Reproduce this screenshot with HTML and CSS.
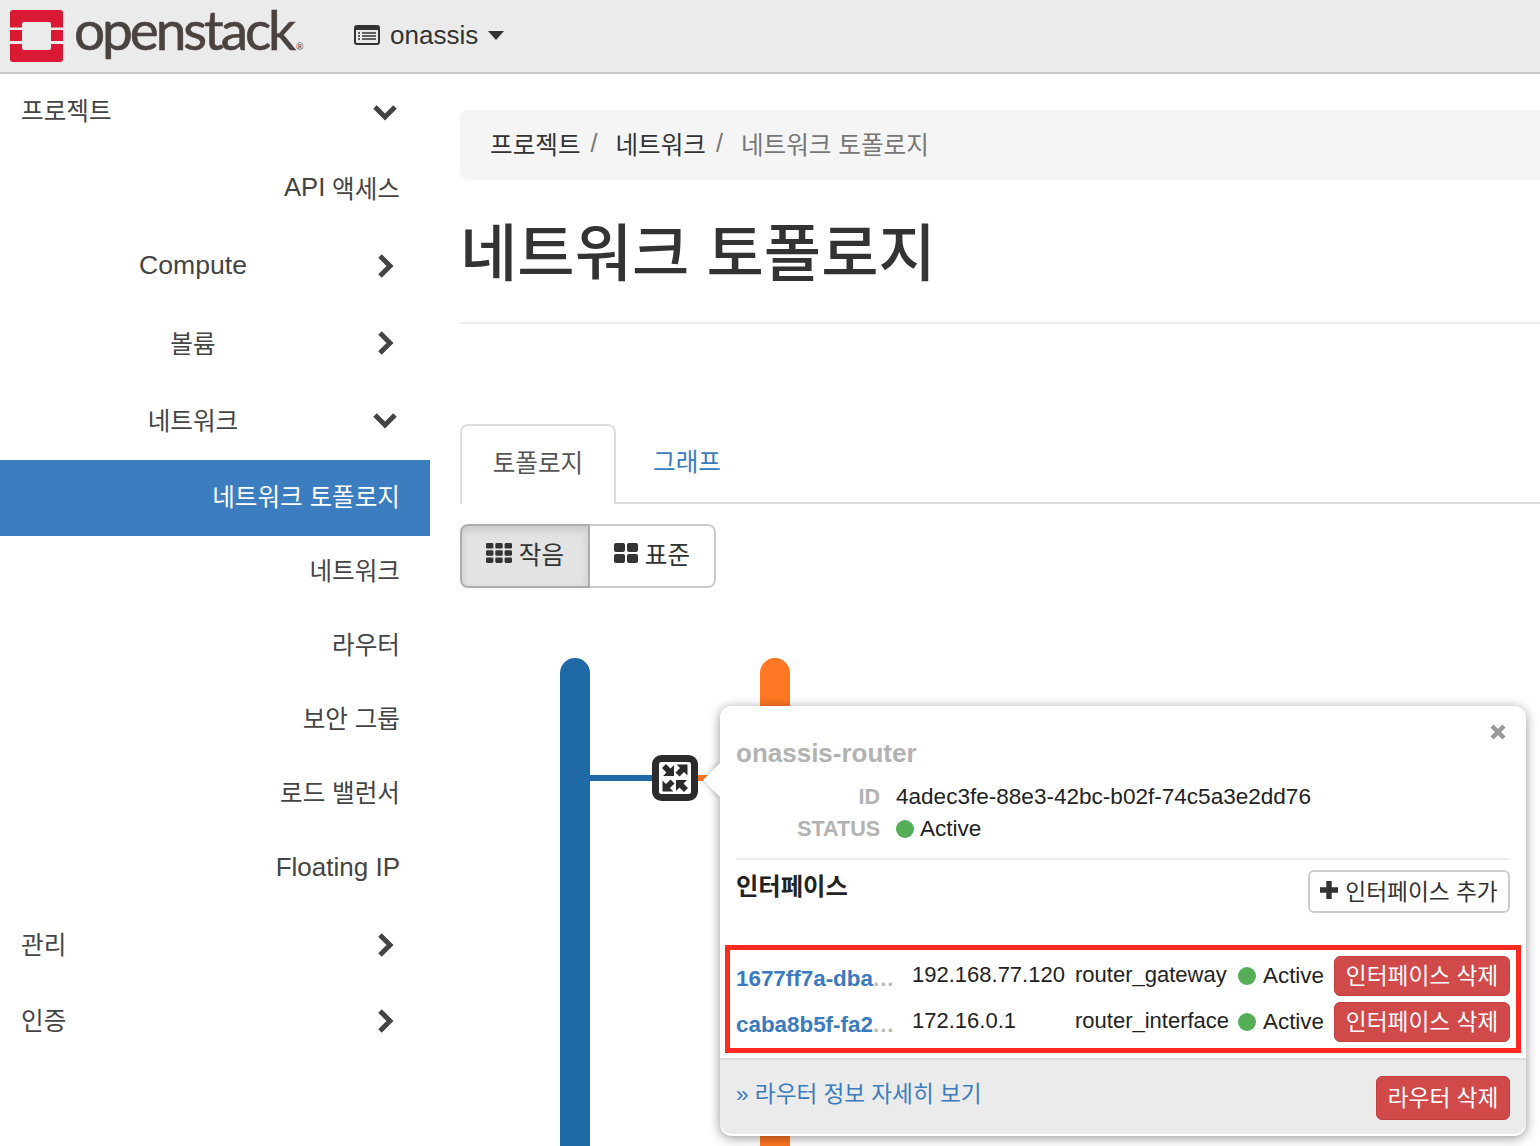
FILE: index.html
```html
<!DOCTYPE html>
<html lang="ko">
<head>
<meta charset="utf-8">
<title>네트워크 토폴로지</title>
<link rel="stylesheet" href="styles.css">
</head>
<body>
<header class="topbar">
  <a class="brand">
    <svg class="brand-mark" viewBox="0 0 53 52" aria-hidden="true">
      <path fill="#da1a32" d="M3 0h47a3 3 0 0 1 3 3v14.500H41V14a2 2 0 0 0-2-2H14a2 2 0 0 0-2 2v3.500H0V3a3 3 0 0 1 3-3zM0 20h12v11H0zM41 20h12v11H41zM0 34h12v4a2 2 0 0 0 2 2h25a2 2 0 0 0 2-2v-4h12v15a3 3 0 0 1-3 3H3a3 3 0 0 1-3-3z"/>
    </svg>
    <span class="brand-name">openstack<sup class="brand-reg">®</sup></span>
  </a>
  <div class="project-picker">
    <svg class="picker-icon" viewBox="0 0 26 20" aria-hidden="true">
      <rect x="1" y="1" width="24" height="18" rx="2" fill="none" stroke="#333" stroke-width="2"/>
      <rect x="1" y="1" width="24" height="4" fill="#333"/>
      <path d="M4 8h2M4 11h2M4 14h2M8 8h14M8 11h14M8 14h14" stroke="#333" stroke-width="1.600"/>
    </svg>
    <span>onassis</span>
    <span class="caret"></span>
  </div>
</header>
<div class="layout">
  <nav class="sidebar">
    <div class="nav-row nav-top nav-first"><span class="nav-label">프로젝트</span><svg class="chev" viewBox="0 0 26 26"><path d="M3 8l10 10L23 8"/></svg></div>
    <div class="nav-row nav-leaf nav-api"><span class="latin-run">API</span>&nbsp;액세스</div>
    <div class="nav-row nav-group"><span class="nav-label nav-latin">Compute</span><svg class="chev" viewBox="0 0 26 26"><path d="M8 3l10 10L8 23"/></svg></div>
    <div class="nav-row nav-group"><span class="nav-label">볼륨</span><svg class="chev" viewBox="0 0 26 26"><path d="M8 3l10 10L8 23"/></svg></div>
    <div class="nav-row nav-group"><span class="nav-label">네트워크</span><svg class="chev" viewBox="0 0 26 26"><path d="M3 8l10 10L23 8"/></svg></div>
    <div class="nav-row nav-leaf nav-active">네트워크 토폴로지</div>
    <div class="nav-row nav-leaf nav-sub">네트워크</div>
    <div class="nav-row nav-leaf nav-sub">라우터</div>
    <div class="nav-row nav-leaf nav-sub">보안 그룹</div>
    <div class="nav-row nav-leaf nav-sub">로드 밸런서</div>
    <div class="nav-row nav-leaf nav-sub nav-fip">Floating IP</div>
    <div class="nav-row nav-top"><span class="nav-label">관리</span><svg class="chev" viewBox="0 0 26 26"><path d="M8 3l10 10L8 23"/></svg></div>
    <div class="nav-row nav-top"><span class="nav-label">인증</span><svg class="chev" viewBox="0 0 26 26"><path d="M8 3l10 10L8 23"/></svg></div>
  </nav>
  <main class="content">
    <ol class="breadcrumb">
      <li class="crumb">프로젝트</li>
      <li class="sep">/</li>
      <li class="crumb">네트워크</li>
      <li class="sep">/</li>
      <li class="crumb crumb-current">네트워크 토폴로지</li>
    </ol>
    <h1 class="page-title">네트워크 토폴로지</h1>
    <ul class="tabs">
      <li class="tab tab-active">토폴로지</li>
      <li class="tab tab-link">그래프</li>
    </ul>
    <div class="btn-group">
      <button class="toggle toggle-on">
        <svg class="toggle-icon" viewBox="0 0 26 20"><g fill="#333"><rect x="0" y="0" width="7.400" height="5.600" rx="1.400"/><rect x="9.300" y="0" width="7.400" height="5.600" rx="1.400"/><rect x="18.600" y="0" width="7.400" height="5.600" rx="1.400"/><rect x="0" y="7.200" width="7.400" height="5.600" rx="1.400"/><rect x="9.300" y="7.200" width="7.400" height="5.600" rx="1.400"/><rect x="18.600" y="7.200" width="7.400" height="5.600" rx="1.400"/><rect x="0" y="14.400" width="7.400" height="5.600" rx="1.400"/><rect x="9.300" y="14.400" width="7.400" height="5.600" rx="1.400"/><rect x="18.600" y="14.400" width="7.400" height="5.600" rx="1.400"/></g></svg>
        작음
      </button>
      <button class="toggle toggle-off">
        <svg class="toggle-icon" viewBox="0 0 24 20"><g fill="#333"><rect x="0" y="0" width="11" height="9" rx="2"/><rect x="13" y="0" width="11" height="9" rx="2"/><rect x="0" y="11" width="11" height="9" rx="2"/><rect x="13" y="11" width="11" height="9" rx="2"/></g></svg>
        표준
      </button>
    </div>
    <div class="canvas">
      <div class="net net-blue"></div>
      <div class="net net-orange"></div>
      <div class="link link-blue"></div>
      <div class="link link-orange"></div>
      <svg class="router" viewBox="0 0 46 46" aria-hidden="true">
        <rect x="3.500" y="3.500" width="39" height="39" rx="6" fill="#fff" stroke="#2b2b2b" stroke-width="7"/>
        <g fill="#2b2b2b">
          <path d="M35.500 9.500V20.500L32 17l-4.500 4.500-4-4L28 13l-3.500-3.500z"/>
          <path d="M35.500 9.500V20.500L32 17l-4.500 4.500-4-4L28 13l-3.500-3.500z" transform="rotate(180 23 23)"/>
          <path d="M22 21H11l3.500-3.500L10 13l4-4 4.500 4.500L22 10z"/>
          <path d="M22 21H11l3.500-3.500L10 13l4-4 4.500 4.500L22 10z" transform="rotate(180 23 23)"/>
        </g>
      </svg>
      <section class="popover">
        <span class="popover-arrow"></span>
        <div class="popover-body">
          <svg class="close" viewBox="0 0 16 16" aria-hidden="true"><path d="M2 2l12 12M14 2L2 14"/></svg>
          <h3 class="router-name">onassis-router</h3>
          <dl class="facts">
            <dt>ID</dt><dd>4adec3fe-88e3-42bc-b02f-74c5a3e2dd76</dd>
            <dt>STATUS</dt><dd><span class="dot"></span>Active</dd>
          </dl>
          <div class="iface-head">
            <h4 class="iface-title">인터페이스</h4>
            <button class="btn-add"><svg class="plus" viewBox="0 0 20 20"><path d="M10 0v20M0 10h20"/></svg>인터페이스 추가</button>
          </div>
          <div class="highlight">
            <div class="iface-row">
              <span class="iface-id"><b>1677ff7a-dba</b><i>...</i></span>
              <span class="iface-ip">192.168.77.120</span>
              <span class="iface-type">router_gateway</span>
              <span class="iface-status"><span class="dot"></span>Active</span>
              <button class="btn-danger">인터페이스 삭제</button>
            </div>
            <div class="iface-row">
              <span class="iface-id"><b>caba8b5f-fa2</b><i>...</i></span>
              <span class="iface-ip">172.16.0.1</span>
              <span class="iface-type">router_interface</span>
              <span class="iface-status"><span class="dot"></span>Active</span>
              <button class="btn-danger">인터페이스 삭제</button>
            </div>
          </div>
        </div>
        <footer class="popover-foot">
          <a class="more">» 라우터 정보 자세히 보기</a>
          <button class="btn-danger btn-foot">라우터 삭제</button>
        </footer>
      </section>
    </div>
  </main>
</div>
</body>
</html>
```
FILE: styles.css
```css
* { box-sizing: border-box; }
html, body { margin: 0; height: 1146px; overflow: hidden; background: #fff; }
body { font-family: "Liberation Sans", "Noto Sans CJK KR", sans-serif; font-size: 24px; color: #333; width: 1540px; }
ol, ul { list-style: none; margin: 0; padding: 0; }
button { font-family: inherit; cursor: pointer; }

.topbar { height: 74px; background: #ebebeb; border-bottom: 2px solid #c9c9c9; display: flex; align-items: flex-start; }
.brand { display: flex; align-items: flex-start; width: 354px; padding: 10px 0 0 10px; }
.brand-mark { width: 53px; height: 52px; flex: none; }
.brand-name { font-family: "Lato", sans-serif; font-size: 55px; line-height: 58px; color: #4b4340; margin: -10px 0 0 11px; letter-spacing: -3.100px; -webkit-text-stroke: 0.6px #4b4340; }
.brand-reg { font-size: 9px; line-height: 0; vertical-align: baseline; letter-spacing: 0; margin-left: 3px; -webkit-text-stroke: 0; }
.project-picker { display: flex; align-items: center; height: 70px; font-size: 26px; color: #333; }
.picker-icon { width: 26px; height: 20px; margin-right: 10px; }
.caret { width: 0; height: 0; border-left: 8px solid transparent; border-right: 8px solid transparent; border-top: 9px solid #333; margin-left: 10px; }

.layout { display: flex; }
.sidebar { width: 430px; flex: none; font-size: 24.600px; color: #444; }
.nav-row { display: flex; align-items: center; height: 77px; }
.nav-label { padding-bottom: 5px; }
.nav-top { padding: 0 32px 0 21px; justify-content: space-between; height: 76px; }
.nav-first { height: 78px; }
.nav-top .nav-label { padding-bottom: 4px; }
.nav-first .nav-label { padding-bottom: 8px; }
.nav-first .chev { margin-bottom: 2px; }
.nav-group .nav-label { width: 386px; text-align: center; flex: none; margin-right: -14px; }
.nav-group .chev { margin-bottom: 3px; }
.nav-group .nav-latin { font-size: 26.600px; padding-bottom: 4px; }
.nav-leaf { justify-content: flex-end; padding: 0 30px 7px 0; }
.latin-run { font-size: 25.600px; }
.nav-sub { height: 74px; padding-bottom: 8px; }
.nav-fip { height: 75px; font-size: 26px; padding-bottom: 4px; }
.nav-active { background: #3c7dbf; color: #fff; height: 76px; padding-bottom: 6px; }
.chev { width: 26px; height: 26px; flex: none; }
.chev path { fill: none; stroke: #444; stroke-width: 5; }

.content { width: 1110px; flex: none; padding: 36px 0 0 30px; }
.breadcrumb { display: flex; align-items: center; height: 70px; background: #f5f5f5; border-radius: 8px 0 0 8px; padding: 0 0 4px 30px; font-size: 24.600px; color: #333; }
.sep { color: #777; margin: 0 18px 0 10px; font-size: 25px; }
.crumb-current { color: #777; }
.page-title { font-size: 62.300px; font-weight: 500; line-height: 72px; margin: 39px 0 0; border-bottom: 2px solid #eee; color: #333; height: 105px; }
.tabs { display: flex; margin-top: 100px; height: 80px; border-bottom: 2px solid #ddd; }
.tab { font-size: 24.600px; height: 80px; display: flex; align-items: center; justify-content: center; }
.tab-active { width: 156px; background: #fff; border: 2px solid #ddd; border-bottom: 0; border-radius: 8px 8px 0 0; color: #555; padding-bottom: 8px; }
.tab-link { width: 142px; color: #3a7cc0; padding-bottom: 8px; }

.btn-group { display: flex; margin-top: 20px; height: 64px; }
.toggle { height: 64px; display: flex; align-items: center; justify-content: center; gap: 7px; font-size: 24.600px; color: #333; background: #fff; border: 2px solid #ccc; padding: 0 0 6px; }
.toggle-on { width: 130px; background: #e3e3e3; border-color: #adadad; border-radius: 8px 0 0 8px; box-shadow: inset 0 4px 8px rgba(0,0,0,.12); }
.toggle-off { width: 126px; border-left: 0; border-radius: 0 8px 8px 0; }
.toggle-icon { width: 26px; height: 20px; }
.toggle-off .toggle-icon { width: 24px; }

.canvas { position: relative; height: 560px; }
.net { position: absolute; top: 70px; width: 30px; height: 500px; border-radius: 15px 15px 0 0; }
.net-blue { left: 100px; background: #1f69a6; }
.net-orange { left: 300px; background: #ff7722; }
.link { position: absolute; top: 187px; height: 6px; }
.link-blue { left: 130px; width: 70px; background: #1f69a6; }
.link-orange { left: 236px; width: 24px; background: #ff7722; }
.router { position: absolute; left: 192px; top: 167px; width: 46px; height: 46px; }

.popover { position: absolute; left: 260px; top: 118px; width: 806px; height: 430px; background: #fff; border-radius: 12px; box-shadow: 0 2px 12px rgba(0,0,0,.42); font-size: 22.550px; color: #222; }
.popover-arrow { position: absolute; left: -12px; top: 62px; width: 24px; height: 24px; background: #fff; transform: rotate(45deg); box-shadow: -1px 1px 5px rgba(0,0,0,.2); }
.popover-body { position: relative; padding: 30px 16px 0; height: 354px; border-bottom: 2px solid #ddd; background: #fff; border-radius: 12px 12px 0 0; }
.close { position: absolute; right: 20px; top: 18px; width: 16px; height: 16px; }
.close path { stroke: #999; stroke-width: 4.500; fill: none; }
.router-name { margin: 0; font-size: 26px; line-height: 34px; font-weight: 700; color: #b2b2b2; }
.facts { display: grid; grid-template-columns: 144px 1fr; grid-auto-rows: 32px; align-content: start; column-gap: 16px; margin: 11px 0 0; line-height: 32px; border-bottom: 2px solid #eee; height: 79px; }
.facts dt { text-align: right; font-weight: 700; font-size: 21.500px; color: #b2b2b2; }
.facts dd { margin: 0; display: flex; align-items: center; }
.dot { display: inline-block; width: 18px; height: 18px; border-radius: 50%; background: #53ae55; margin-right: 6px; flex: none; }
.iface-head { display: flex; justify-content: space-between; align-items: flex-start; padding-top: 10px; }
.iface-title { margin: -1px 0 0; font-size: 24.300px; line-height: 36px; font-weight: 700; color: #222; }
.btn-add { width: 202px; height: 43px; background: #fff; border: 2px solid #ccc; border-radius: 6px; font-size: 22.700px; color: #333; display: flex; align-items: center; justify-content: center; gap: 7px; padding: 0 0 3px; }
.plus { width: 18px; height: 18px; flex: none; }
.plus path { stroke: #333; stroke-width: 6; fill: none; }
.highlight { margin: 32px -11px 0 -11px; height: 108px; border: 5px solid #fd2b1f; padding: 3px 6px 0 6px; }
.iface-row { display: flex; align-items: center; height: 46px; white-space: nowrap; font-size: 22px; }
.iface-id { width: 176px; flex: none; font-weight: 700; color: #3a7ac0; font-size: 22.400px; padding-top: 5px; }
.iface-id b { font-weight: 700; }
.iface-id i { font-style: normal; color: #bbb; font-weight: 700; letter-spacing: 1px; }
.iface-ip { width: 163px; flex: none; padding-bottom: 2px; }
.iface-type { width: 163px; flex: none; padding-bottom: 2px; }
.iface-status { width: 96px; flex: none; display: flex; align-items: center; font-size: 22.400px; }
.iface-status .dot { margin-right: 7px; }
.btn-danger { height: 40px; background: #d14a4a; border: 1px solid #c23f3f; border-radius: 6px; color: #fff; font-size: 22.700px; padding: 0 0 4px; white-space: nowrap; }
.iface-row .btn-danger { width: 176px; }
.popover-foot { height: 74px; background: #ebebeb; border-radius: 0 0 12px 12px; display: flex; justify-content: space-between; padding: 14px 16px 0; }
.more { color: #3a7cc0; font-size: 22.600px; line-height: 38px; padding-top: 2px; }
.btn-foot { width: 134px; height: 44px; margin-top: 2px; }
```
